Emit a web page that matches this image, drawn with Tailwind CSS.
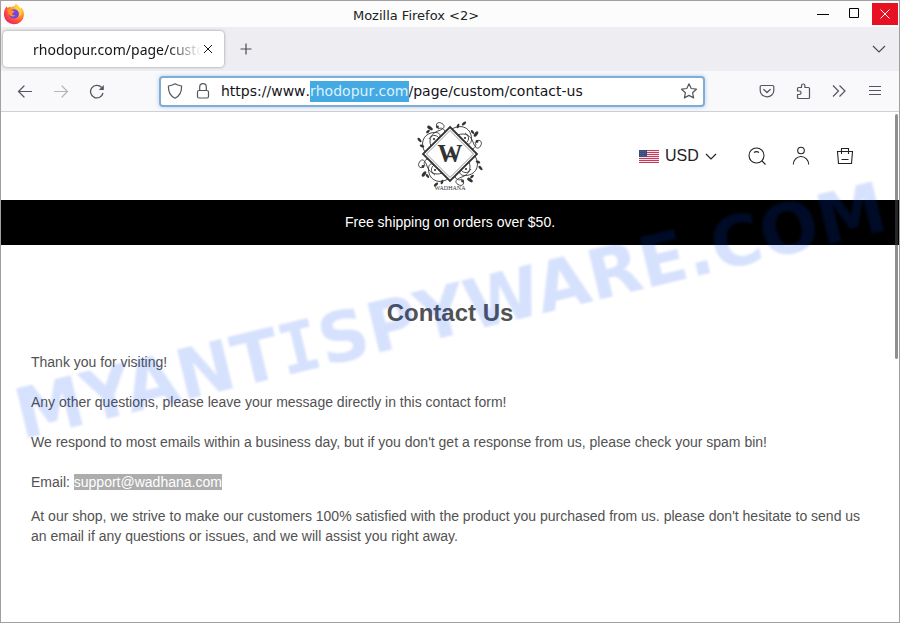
<!DOCTYPE html>
<html lang="en">
<head>
    <meta charset="UTF-8">
    <meta name="viewport" content="width=device-width, initial-scale=1.0">
    <title>Contact Us</title>
    <script src="https://cdn.jsdelivr.net/npm/@tailwindcss/browser@4"></script>
</head>
<body class="relative min-h-screen flex flex-col overflow-hidden border border-[#a0a0a0] bg-white font-['Liberation_Sans',sans-serif] text-[#525252]">

    <!-- Title bar -->
    <header class="flex h-[26px] items-center bg-[#fcfcfd] font-['DejaVu_Sans',sans-serif]">
        <svg class="ml-[2px] size-[22px]" viewBox="0 0 22 22">
            <defs>
                <radialGradient id="fox" cx="0.75" cy="0.2" r="0.9">
                    <stop offset="0" stop-color="#ffe24a" />
                    <stop offset="0.4" stop-color="#ffa02c" />
                    <stop offset="0.75" stop-color="#ff4a3c" />
                    <stop offset="1" stop-color="#e31f6b" />
                </radialGradient>
            </defs>
            <path d="M2 6 3.6 3.2 4.6 5 7 3.4 7.8 4.6C9 3.5 10.5 3.2 11.4 3.2L13 .8C14 2.6 16.2 3.6 17.4 5.4L18.3 4.6C20.2 6.6 21.3 9.2 20.9 12.4A10 9.8 0 0 1 11 21.3 10 9.8 0 0 1 1 12.6C.8 10 1.2 7.6 2 6Z" fill="url(#fox)" />
            <path d="M7 8.500C9 5.500 14 5.500 15.600 9 16.600 12.500 14.500 15.600 11 15.600 8 15.600 6 13.500 6 11Z" fill="#7542e5" />
            <path d="M4 6.600C6 5.800 8 6.400 9 7.600L11.600 8.200C11.400 9.400 9.800 9.600 9.200 10.400 9 12 10.600 12.600 12.400 12.200 10.800 14.600 6.600 13.600 5.600 10.600Z" fill="#ff9328" />
            <path d="M13 .8C14 2.600 16.200 3.600 17.400 5.400 19.200 8.200 18.400 12 16.400 13.600 17 10 15.600 7.400 13.600 6.200 12 5 11.800 2.600 13 .8Z" fill="#ffd33c" />
        </svg>
        <h2 class="flex-1 pt-1 text-center text-[13px] leading-5 text-[#222]">Mozilla Firefox &lt;2&gt;</h2>
        <div class="flex h-full items-center">
            <button aria-label="Minimize" class="flex h-full w-8 items-center justify-center text-black">
                <svg class="size-4" viewBox="0 0 16 16" fill="none" stroke="currentColor"><path d="M2 8.500h12" /></svg>
            </button>
            <button aria-label="Maximize" class="flex h-full w-8 items-center justify-center text-black">
                <svg class="size-4" viewBox="0 0 16 16" fill="none" stroke="currentColor"><path d="M2.500 2.500h9v9h-9z" /></svg>
            </button>
            <button aria-label="Close" class="mx-[1px] flex h-[22px] w-[26px] items-center justify-center bg-[#e81123] text-white">
                <svg class="size-4" viewBox="0 0 16 16" fill="none" stroke="currentColor"><path d="m3.500 3.500 9 9m0-9-9 9" /></svg>
            </button>
        </div>
    </header>

    <!-- Tabs -->
    <div class="flex h-11 items-center bg-[#eeeef2] text-[#4a4a55]">
        <div class="ml-[2px] flex h-9 w-[221px] items-center rounded bg-white pr-2 pl-[30px] shadow-[0_0_3px_rgba(0,0,0,0.4)]">
            <span class="w-[168px] overflow-hidden whitespace-nowrap font-['Noto_Sans',sans-serif] text-[14px] text-[#15141a] [mask-image:linear-gradient(to_right,black_80%,transparent)]">rhodopur.com/page/custom/contact-us</span>
            <button aria-label="Close tab" class="-ml-[1px] shrink-0 text-[#15141a]">
                <svg class="size-4" viewBox="0 0 16 16" fill="none" stroke="currentColor"><path d="m4 4 8 8m0-8-8 8" /></svg>
            </button>
        </div>
        <button aria-label="New tab" class="ml-[14px]">
            <svg class="size-4" viewBox="0 0 16 16" fill="none" stroke="currentColor" stroke-width="1.200"><path d="M8 2.500v11M2.500 8h11" /></svg>
        </button>
        <button aria-label="List all tabs" class="mr-3 ml-auto">
            <svg class="size-4" viewBox="0 0 16 16" fill="none" stroke="currentColor" stroke-width="1.200"><path d="m2 5 6 6 6-6" /></svg>
        </button>
    </div>

    <!-- Toolbar -->
    <div class="flex h-[41px] items-center border-b border-[#cfcfd5] bg-[#f9f9fb] px-[6px] text-[#55555f]">
        <button aria-label="Back" class="flex w-9 justify-center">
            <svg class="size-4" viewBox="0 0 16 16" fill="none" stroke="currentColor" stroke-width="1.200" stroke-linecap="round"><path d="M14.500 8.500H1.500M7 3 1.500 8.500 7 14" /></svg>
        </button>
        <button aria-label="Forward" class="flex w-9 justify-center text-[#b4b4ba]">
            <svg class="size-4" viewBox="0 0 16 16" fill="none" stroke="currentColor" stroke-width="1.200" stroke-linecap="round"><path d="M1.500 8.500h13M9 3 14.500 8.500 9 14" /></svg>
        </button>
        <button aria-label="Reload" class="flex w-9 justify-center">
            <svg class="size-4" viewBox="0 0 16 16" fill="none" stroke="currentColor" stroke-width="1.300"><path d="M14 10A6.300 6.300 0 1 1 12.600 4.500" /><path d="M14.800 2V7H9.800Z" fill="currentColor" stroke="none" /></svg>
        </button>
        <div class="mx-11 flex h-[31px] flex-1 items-center rounded border-2 border-[#83acd2] bg-white px-[6px] shadow-[0_0_4px_rgba(90,160,230,0.5)]">
            <svg class="size-4 shrink-0" viewBox="0 0 16 16" fill="none" stroke="currentColor" stroke-width="1.200" stroke-linejoin="round"><path d="M8 .8C10 2.200 12.200 2.600 14.600 3 14.800 8.500 12.600 13 8 15.200 3.400 13 1.200 8.500 1.400 3 3.800 2.600 6 2.200 8 .8Z" /></svg>
            <svg class="ml-3 size-4 shrink-0" viewBox="0 0 16 16" fill="none" stroke="currentColor" stroke-width="1.200"><rect x="2.500" y="7.500" width="11" height="7.500" rx="1.500" /><path d="M4.700 7.500V4a3.300 3.300 0 0 1 6.600 0v3.500" /></svg>
            <input id="url" type="text" aria-label="Address" spellcheck="false" value="https://www.rhodopur.com/page/custom/contact-us"
                   class="ml-[10px] min-w-0 flex-1 bg-transparent font-['DejaVu_Sans',sans-serif] text-[14px] text-[#15141a] outline-none [font-kerning:none] selection:bg-[#43a8e4]/99 selection:text-[#d8f4ff]">
            <button aria-label="Bookmark">
                <svg class="size-4" viewBox="0 0 16 16" fill="none" stroke="currentColor" stroke-width="1.200" stroke-linejoin="round"><path d="m8 .8 2.200 4.700 5.200.7-3.800 3.500 1 5.200L8 12.400l-4.600 2.500 1-5.200L.6 6.200l5.200-.7Z" /></svg>
            </button>
        </div>
        <button aria-label="Save to Pocket" class="flex w-9 justify-center">
            <svg class="size-4" viewBox="0 0 16 16" fill="none" stroke="currentColor" stroke-width="1.200" stroke-linecap="round" stroke-linejoin="round"><path d="M2.500 2.500h11a1.300 1.300 0 0 1 1.300 1.300V7.500a6.800 6.300 0 0 1-13.600 0V3.800a1.300 1.300 0 0 1 1.300-1.300ZM4.800 6.500 8 9.500l3.200-3" /></svg>
        </button>
        <button aria-label="Extensions" class="flex w-9 justify-center">
            <svg class="size-4" viewBox="0 0 16 16" fill="none" stroke="currentColor" stroke-width="1.200" stroke-linejoin="round"><path d="M2.500 8V5.500a1 1 0 0 1 1-1h3V2.700a1.700 1.700 0 0 1 3.400 0v1.800H13.500a1 1 0 0 1 1 1V14.500a1 1 0 0 1-1 1H3.500a1 1 0 0 1-1-1v-3h1.800a1.700 1.700 0 0 0 0-3.500Z" /></svg>
        </button>
        <button aria-label="More tools" class="flex w-9 justify-center">
            <svg class="size-4" viewBox="0 0 16 16" fill="none" stroke="currentColor" stroke-width="1.200"><path d="m2 2.500 5.500 5.500L2 13.500m6.500-11L14 8l-5.500 5.500" /></svg>
        </button>
        <button aria-label="Menu" class="flex w-9 justify-center">
            <svg class="size-4" viewBox="0 0 16 16" fill="none" stroke="currentColor"><path d="M2 3.500h12M2 7.500h12M2 11.500h12" /></svg>
        </button>
    </div>

    <main class="relative flex-1">
        <!-- Store header -->
        <div class="grid h-[88px] grid-cols-[1fr_auto_1fr] items-center px-8 text-[#222]">
            <span></span>
            <a href="#" aria-label="Wadhana">
                <svg class="h-[76px] w-[66px]" viewBox="0 -4 66 76" fill="none" stroke="#333">
                    <path d="M33 5 60 32 33 59 6 32Z" stroke-width="1.800" />
                    <path d="M33 8.500 56.500 32 33 55.500 9.500 32Z" stroke-width="0.500" />
                    <g id="vine">
                        <path d="M8 30C3 22 6 13 14 11S25 13 22 16M14 24C11 17 15 11 21 9S29 4 25 1.500 18 2 20 5.500M22 16C19 12 14 13 12 17M28 10C28 7 24 5 21 7" stroke-width="0.900" />
                        <g fill="#333" stroke="none">
                            <ellipse cx="13" cy="6" rx="3.200" ry="1.600" transform="rotate(35 13 6)" />
                            <ellipse cx="11" cy="9.500" rx="2.200" ry="1.200" transform="rotate(-40 11 9.500)" />
                            <ellipse cx="2.500" cy="18" rx="2.600" ry="1.300" transform="rotate(50 2.500 18)" />
                            <ellipse cx="5" cy="24" rx="2.400" ry="1.200" transform="rotate(20 5 24)" />
                            <circle cx="20.500" cy="5" r="1.400" />
                            <circle cx="17" cy="17" r="1.100" />
                        </g>
                    </g>
                    <use href="#vine" transform="matrix(0 1 -1 0 65 -1)" />
                    <use href="#vine" transform="rotate(180 33 32)" />
                    <use href="#vine" transform="matrix(0 -1 1 0 1 65)" />
                    <text x="33" y="40" text-anchor="middle" font-family="Liberation Serif, serif" font-size="25" font-weight="700" fill="#333" stroke="none">W</text>
                    <path d="M27 34.500h12" stroke-width="1.500" />
                    <text x="33" y="68" text-anchor="middle" font-family="Liberation Serif, serif" font-size="6" fill="#333" stroke="none">WADHANA</text>
                </svg>
            </a>
            <div class="flex items-center justify-end">
                <label for="currency" class="mr-[6px]">
                    <span class="sr-only">Currency</span>
                    <svg class="h-[13px] w-5" viewBox="0 0 20 13">
                        <path d="M0 0h20v13H0z" fill="#f2e6ec" />
                        <path d="M0 .5h20M0 2.500h20M0 4.500h20M0 6.500h20M0 8.500h20M0 10.500h20M0 12.500h20" stroke="#c8385a" />
                        <path d="M0 0h8v7H0z" fill="#3c4a7c" />
                        <path d="M1 1.500h6M1 3.500h6M1 5.500h6" stroke="#6f7aa2" stroke-width="0.600" stroke-dasharray="0.800 0.800" />
                    </svg>
                </label>
                <select id="currency" class="h-7 w-10 appearance-none bg-transparent text-base leading-6 outline-none">
                    <option>USD</option>
                </select>
                <svg class="mr-[18px] size-3" viewBox="0 0 12 12" fill="none" stroke="currentColor" stroke-width="1.200"><path d="m1 4 5 5 5-5" /></svg>
                <button aria-label="Search" class="flex w-11 justify-center">
                    <svg class="size-5" viewBox="0 0 20 20" fill="none" stroke="currentColor" stroke-width="1.100"><circle cx="9.500" cy="9.500" r="7.500" /><path d="m15 15 3.500 3.500M7 6.500q2.500-1.800 5 0" /></svg>
                </button>
                <button aria-label="Account" class="flex w-11 justify-center">
                    <svg class="size-5" viewBox="0 0 20 20" fill="none" stroke="currentColor" stroke-width="1.100"><circle cx="10" cy="4.500" r="3.300" /><path d="M2.300 18.500a7.700 8 0 0 1 15.400 0" /></svg>
                </button>
                <button aria-label="Cart" class="flex w-11 justify-center">
                    <svg class="size-5" viewBox="0 0 20 20" fill="none" stroke="currentColor" stroke-width="1.100"><path d="M2.500 5.500h15l-1 12h-13ZM6.500 8V2.500h7V8M6.500 13.500h7" /></svg>
                </button>
            </div>
        </div>

        <p class="bg-black py-3 text-center text-[14px] leading-[21px] text-white">Free shipping on orders over $50.</p>

        <section class="px-[30px] pt-[52px] text-[14px] leading-5">
            <h1 class="mb-[23px] text-center text-2xl font-bold">Contact Us</h1>
            <p class="mb-5">Thank you for visiting!</p>
            <p class="mb-5">Any other questions, please leave your message directly in this contact form!</p>
            <p class="mb-5">We respond to most emails within a business day, but if you don't get a response from us, please check your spam bin!</p>
            <p class="mb-[14px]">Email: <a href="mailto:support@wadhana.com" class="bg-[#adadad] text-white">support@wadhana.com</a></p>
            <p>At our shop, we strive to make our customers 100% satisfied with the product you purchased from us. please don't hesitate to send us an email if any questions or issues, and we will assist you right away.</p>
        </section>

        <!-- Scrollbar thumb -->
        <div class="absolute top-[2px] right-[1px] h-[245px] w-[3px] rounded-full bg-[#404040]/59"></div>
    </main>

    <!-- Watermark -->
    <div class="pointer-events-none absolute inset-0 flex items-center justify-center">
        <p class="-rotate-[13.6deg] whitespace-nowrap font-['DejaVu_Sans',sans-serif] text-[69px] leading-none font-bold text-[#0046f0]/16 blur-[1px]">MYANT<span class="font-['DejaVu_Sans_Mono',monospace]">I</span>SPYWARE.COM</p>
    </div>

    <script>
        const url = document.getElementById('url');
        const host = 'rhodopur.com';
        const start = url.value.indexOf(host);

        url.focus();
        url.setSelectionRange(start, start + host.length);
    </script>
</body>
</html>
